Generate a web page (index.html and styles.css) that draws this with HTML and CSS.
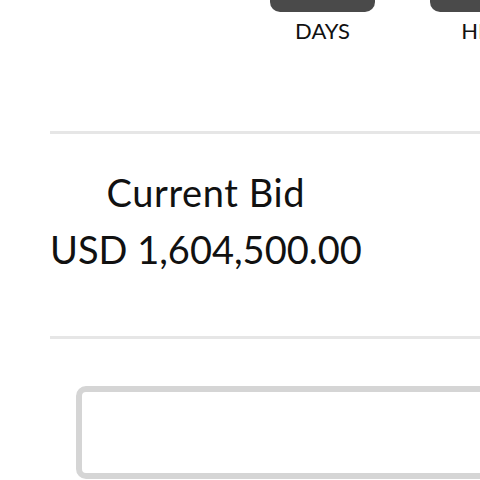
FILE: index.html
```html
<!DOCTYPE html>
<html lang="en">
<head>
    <meta charset="UTF-8">
    <title>Auction</title>
    <link rel="stylesheet" href="styles.css">
</head>
<body>
<div class="countdown">
    <div class="unit">
        <div class="digits"></div>
        <span>DAYS</span>
    </div>
    <div class="unit">
        <div class="digits"></div>
        <span>HRS</span>
    </div>
</div>
<div class="panel">
    <div class="divider"></div>
    <div class="bid">
        <p class="bid-label">Current Bid</p>
        <p>USD 1,604,500.00</p>
    </div>
    <div class="divider"></div>
    <div class="bid-input"></div>
</div>
</body>
</html>
```

FILE: styles.css
```css
* {
    margin: 0;
    padding: 0;
}

body {
    font-family: Lato, "Liberation Sans", sans-serif;
    color: #111;
    background: #fff;
    overflow: hidden;
}

.countdown {
    display: flex;
    gap: 55px;
    padding-left: 270px;
    margin-top: -40px;
}

.unit {
    width: 105px;
    flex-shrink: 0;
    text-align: center;
}

.digits {
    height: 52px;
    background: #4a4a4a;
    border-radius: 10px;
}

.unit span {
    display: block;
    margin-top: 6px;
    font-size: 22px;
    line-height: 26px;
}

.panel {
    margin-left: 50px;
    margin-top: 87px;
}

.divider {
    height: 3px;
    background: #e6e6e6;
}

.bid {
    width: fit-content;
    margin: 30px 0 58px;
    text-align: center;
    font-size: 38px;
    line-height: 57px;
}

.bid-label {
    letter-spacing: 0.6px;
}

.bid-input {
    margin: 47px 0 0 26px;
    width: 500px;
    height: 81px;
    border: 6px solid #d5d5d5;
    border-radius: 10px;
}
```
